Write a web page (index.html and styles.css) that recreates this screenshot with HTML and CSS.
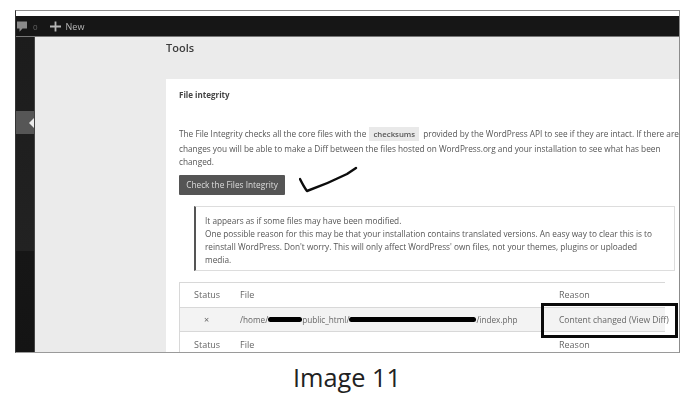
FILE: index.html
```html
<!DOCTYPE html>
<html lang="en">
<head>
<meta charset="utf-8">
<title>Image 11</title>
<link rel="stylesheet" href="styles.css">
</head>
<body>
<div class="shot">
  <div class="topstrip"></div>
  <div class="adminbar">
    <svg class="bubble" width="10" height="11" viewBox="0 0 10 11"><path d="M0 0.500h10v7H5.500L2.500 10.800V7.500H0z" fill="#8a8a8a"/></svg>
    <span class="count">0</span>
    <svg class="plus" width="11" height="11" viewBox="0 0 11 11"><path d="M4.600 0.500h1.800v4.100H11v1.800H6.400v4.100H4.600V6.400H0V4.600h4.600z" fill="#b5b5b5"/></svg>
    <span class="new">New</span>
  </div>
  <div class="main">
    <aside class="sidebar">
      <div class="side-item"><span class="side-arrow"></span></div>
    </aside>
    <div class="content">
      <h1 class="title">Tools</h1>
      <section class="card">
        <h2 class="card-title">File integrity</h2>
        <p class="intro">The File Integrity checks all the core files with the <code class="code">checksums</code> provided by the WordPress API to see if they are intact. If there are<br>changes you will be able to make a Diff between the files hosted on WordPress.org and your installation to see what has been<br>changed.</p>
        <div class="action">
          <button class="btn">Check the Files Integrity</button>
          <svg class="tick" width="62" height="30" viewBox="0 0 62 30"><path d="M1 15C3 19 5 23 8 27C22 22 36 16 48 10C51 8 54 6 57 4" fill="none" stroke="#0c0c0c" stroke-width="2.400" stroke-linecap="round" stroke-linejoin="round"/></svg>
        </div>
        <div class="notice">
          <p>It appears as if some files may have been modified.<br>One possible reason for this may be that your installation contains translated versions. An easy way to clear this is to<br>reinstall WordPress. Don't worry. This will only affect WordPress' own files, not your themes, plugins or uploaded<br>media.</p>
        </div>
        <div class="table">
          <div class="row">
            <span class="c-status">Status</span><span class="c-file">File</span><span class="c-reason">Reason</span>
          </div>
          <div class="row row-alt">
            <span class="c-status c-x">×</span>
            <span class="c-file c-path">/home/<span class="mark mark-a"></span>public_html/<span class="mark mark-b"></span>/index.php</span>
            <span class="c-reason">Content changed (View Diff)</span>
            <span class="callout"></span>
          </div>
          <div class="row row-last">
            <span class="c-status">Status</span><span class="c-file">File</span><span class="c-reason">Reason</span>
          </div>
        </div>
      </section>
    </div>
  </div>
</div>
<p class="caption">Image 11</p>
</body>
</html>
```
FILE: styles.css
```css
* { box-sizing: border-box; }
html, body { margin: 0; padding: 0; background: #fff; }
body { width: 692px; height: 412px; overflow: hidden; font-family: "Open Sans", "Liberation Sans", sans-serif; color: #4a4a4a; }

.shot {
  margin: 10px 0 0 15px;
  width: 665px;
  height: 343px;
  border: 1px solid #8c8c8c;
  border-bottom-color: #9a9a9a;
  border-left-color: #333;
  display: flex;
  flex-direction: column;
  overflow: hidden;
  filter: blur(0.4px);
}
.topstrip { height: 5px; background: #fff; flex: none; }
.adminbar {
  height: 21px;
  flex: none;
  background: #161616;
  border-bottom: 1px solid #777;
  display: flex;
  align-items: center;
  padding-left: 1px;
  font-size: 9px;
  color: #bbb;
}
.bubble { margin-right: 6px; }
.count { color: #666; font-size: 8px; margin-right: 12px; }
.plus { margin-right: 5px; }
.new { color: #b8b8b8; }

.main { flex: 1; display: flex; min-height: 0; }
.sidebar { width: 19px; flex: none; background: linear-gradient(#1c1c1c 0, #222 68%, #161616 68%, #141414 100%); padding-top: 74px; border-right: 1px solid #444; }
.side-item { height: 23px; background: #565656; display: flex; justify-content: flex-end; align-items: center; }
.side-arrow { width: 0; height: 0; border-style: solid; border-width: 5px 5px 5px 0; border-color: transparent #ebebeb transparent transparent; }

.content { flex: 1; min-width: 0; background: #ebebeb; padding-left: 131px; overflow: hidden; }
.title { margin: 0; padding-top: 2px; height: 42px; font-size: 11px; line-height: 18px; font-weight: 600; color: #3c3c3c; }
.card { background: #fff; padding: 9px 0 0 13px; height: 275px; }
.card-title { margin: 0; font-size: 8px; line-height: 13px; font-weight: 700; color: #444; }
.intro { margin: 26px 0 0; font-size: 8.250px; line-height: 13.500px; white-space: nowrap; color: #555; }
.code { font-family: "Open Sans", sans-serif; font-weight: 600; background: #e9e9e9; color: #555; padding: 2px 4px; margin: 0 2px 0 1px; font-size: 7.800px; }
.action { display: flex; align-items: flex-start; margin-top: 6px; height: 31px; }
.btn { width: 106px; height: 20px; padding: 0; border: 0; border-radius: 1px; background: #555; color: #ddd; font-family: inherit; font-size: 8.300px; }
.tick { margin: -11px 0 0 14px; flex: none; }
.notice { margin-left: 15px; width: 481px; height: 65px; background: #fff; border: 1px solid #ddd; border-left: 2px solid #555; padding: 7px 0 0 9px; }
.notice p { margin: 0; font-size: 8.250px; line-height: 13px; white-space: nowrap; color: #555; }

.table { margin-top: 11px; width: 486px; border: 1px solid #d8d8d8; border-right: 0; border-bottom: 0; }
.row { position: relative; height: 24px; display: flex; align-items: center; font-size: 9px; color: #666; white-space: nowrap; }
.row-alt { background: #f3f3f3; border-top: 1px solid #d8d8d8; border-bottom: 1px solid #d8d8d8; font-size: 8.500px; height: 25px; }
.row-last { height: 25px; }
.c-status { width: 60px; flex: none; padding-left: 14px; }
.c-x { padding-left: 24px; font-size: 9px; }
.c-file { width: 319px; flex: none; }
.c-path { font-size: 8.200px; }
.c-reason { flex: none; }
.mark { display: inline-block; height: 5px; background: #000; border-radius: 3px; vertical-align: 1px; }
.mark-a { width: 34px; }
.mark-b { width: 127px; }
.callout { position: absolute; left: 361px; top: -5px; width: 137px; height: 35px; border: 3px solid #0a0a0a; }

.caption { margin: 9px 0 0; padding-left: 2px; text-align: center; font-size: 25.300px; line-height: 30px; color: #222; font-family: "Open Sans", sans-serif; }
```
